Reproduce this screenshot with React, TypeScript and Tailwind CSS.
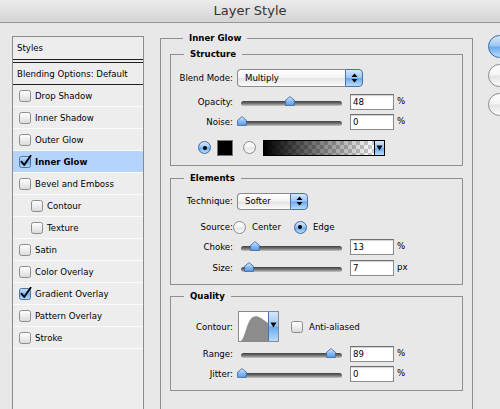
import React from "react";

const aquaBlue =
  "bg-[linear-gradient(#d4e7fc,#9cc6f3_48%,#6aa8ee_52%,#b9dcfb)]";
const aquaWhite =
  "bg-[linear-gradient(#ffffff,#f3f3f3_48%,#e3e3e3_52%,#fbfbfb)]";

const styles = [
  { name: "Drop Shadow" },
  { name: "Inner Shadow" },
  { name: "Outer Glow" },
  { name: "Inner Glow", checked: true, active: true },
  { name: "Bevel and Emboss" },
  { name: "Contour", indent: true },
  { name: "Texture", indent: true },
  { name: "Satin" },
  { name: "Color Overlay" },
  { name: "Gradient Overlay", checked: true },
  { name: "Pattern Overlay" },
  { name: "Stroke" },
];

function Checkbox({ checked, size = 11 }: { checked?: boolean; size?: number }) {
  return (
    <svg width={size + 2} height={size + 2} viewBox="0 0 13 13" className="shrink-0">
      <defs>
        <linearGradient id="cbw" x1="0" y1="0" x2="0" y2="1">
          <stop offset="0" stopColor="#ffffff" />
          <stop offset="0.5" stopColor="#eeeeee" />
          <stop offset="1" stopColor="#d8d8d8" />
        </linearGradient>
        <linearGradient id="cbb" x1="0" y1="0" x2="0" y2="1">
          <stop offset="0" stopColor="#cfe4fb" />
          <stop offset="0.5" stopColor="#7fb2ee" />
          <stop offset="1" stopColor="#b4d8fb" />
        </linearGradient>
      </defs>
      <rect x="0.5" y="1.5" width="11" height="11" rx="2" fill={checked ? "url(#cbb)" : "url(#cbw)"} stroke={checked ? "#4a74a8" : "#8d8d8d"} />
      {checked && <path d="M2.6 6.8 L5.2 10 L11.6 0.8" fill="none" stroke="#000" strokeWidth="1.9" strokeLinecap="round" strokeLinejoin="round" />}
    </svg>
  );
}

function Radio({ checked }: { checked?: boolean }) {
  return (
    <span
      className={`flex h-[13px] w-[13px] shrink-0 items-center justify-center rounded-full border ${
        checked ? "border-[#3d6aa6] " + aquaBlue : "border-[#8a8a8a] " + aquaWhite
      }`}
    >
      {checked && <span className="h-[4px] w-[4px] rounded-full bg-black" />}
    </span>
  );
}

function Label({ children }: { children: React.ReactNode }) {
  return <span className="w-[62px] shrink-0 text-right">{children}</span>;
}

function UpDown() {
  return (
    <svg width="7" height="10" viewBox="0 0 7 10">
      <path d="M3.5 0.5 L6.5 4 H0.5 Z" fill="#000" />
      <path d="M3.5 9.5 L6.5 6 H0.5 Z" fill="#000" />
    </svg>
  );
}

function Down() {
  return (
    <svg width="7" height="6" viewBox="0 0 7 6">
      <path d="M0.5 0.5 H6.5 L3.5 5.5 Z" fill="#000" />
    </svg>
  );
}

function Popup({ label, width, height }: { label: string; width: string; height: string }) {
  return (
    <div className={`ml-[4px] flex ${width} ${height} shrink-0`}>
      <div className={`flex flex-1 items-center rounded-l-[4px] border border-r-0 border-[#8a8a8a] pl-[7px] ${aquaWhite}`}>
        {label}
      </div>
      <div className={`flex w-[18px] items-center justify-center rounded-r-[4px] border border-[#4a74a8] ${aquaBlue}`}>
        <UpDown />
      </div>
    </div>
  );
}

function Thumb() {
  return (
    <svg width="10" height="10" viewBox="0 0 10 10">
      <defs>
        <linearGradient id="th" x1="0" y1="0" x2="0" y2="1">
          <stop offset="0" stopColor="#e4f0fd" />
          <stop offset="0.5" stopColor="#8dbcf1" />
          <stop offset="1" stopColor="#5d9de8" />
        </linearGradient>
      </defs>
      <path d="M5 0.6 L9.4 4.2 V9.4 H0.6 V4.2 Z" fill="url(#th)" stroke="#3f6ea9" strokeWidth="0.9" strokeLinejoin="round" />
    </svg>
  );
}

function Slider({ value }: { value: number }) {
  return (
    <div className="relative ml-[4px] h-[12px] w-[113px] shrink-0">
      <div className="absolute left-[4px] top-[5px] h-[5px] w-[101px] rounded-full bg-[linear-gradient(#3e3e3e,#7a7a7a_55%,#c9c9c9)]" />
      <div className="absolute top-0" style={{ left: value - 0.5 }}>
        <Thumb />
      </div>
    </div>
  );
}

function Field({ value }: { value: string }) {
  return (
    <div className="flex h-[16px] w-[44px] shrink-0 items-center border border-[#8c8c8c] border-t-[#6e6e6e] bg-white pl-[2px] shadow-[inset_0_1px_1px_rgba(0,0,0,0.18)]">
      {value}
    </div>
  );
}

function SliderRow({ label, value, unit, mt }: { label: string; value: number; unit: string; mt: string }) {
  return (
    <div className={`flex h-[18px] items-center ${mt}`}>
      <Label>{label}</Label>
      <Slider value={value} />
      <Field value={String(value)} />
      <span className="mb-[3px] ml-[3px]">{unit}</span>
    </div>
  );
}

function Group({ title, mt, pb, children }: { title: string; mt: string; pb: string; children: React.ReactNode }) {
  return (
    <fieldset className={`border border-[#8f8f8f] ${mt} ${pb}`}>
      <legend className="ml-[13px] h-[12px] px-[6px] font-bold leading-[12px]">{title}</legend>
      {children}
    </fieldset>
  );
}

export default function App() {
  return (
    <div className="h-[409px] w-[500px] overflow-hidden bg-[#e8e8e8] text-[8.6px] leading-[12px] text-black [font-family:'DejaVu_Sans',sans-serif]">
      <div className="flex h-[23px] items-center justify-center border-b border-[#979797] bg-[linear-gradient(#ececec,#d4d4d4)] text-[13px] text-[#333]">
        Layer Style
      </div>

      <div className="flex">
        {/* styles list */}
        <div className="ml-[12px] mt-[13px] h-[400px] w-[132px] shrink-0 border border-[#8b8b8b] bg-[#ededed]">
          <div className="flex h-[23px] items-center border-b border-[#1e1e1e] pl-[4px]">Styles</div>
          <div className="mt-[2px] flex h-[23px] items-center border-y border-[#1e1e1e] pl-[4px]">
            Blending Options: Default
          </div>
          {styles.map((s) => (
            <div
              key={s.name}
              className={`flex h-[22px] items-center gap-[3px] border-b border-[#fafafa] ${
                s.indent ? "pl-[18px]" : "pl-[6px]"
              } ${s.active ? "bg-[#b5d4fd]" : ""}`}
            >
              <Checkbox checked={s.checked} />
              <span className={s.active ? "font-bold" : ""}>{s.name}</span>
            </div>
          ))}
        </div>

        {/* main panel */}
        <fieldset className="ml-[16px] mt-[9px] h-[400px] w-[313px] shrink-0 border border-[#8f8f8f] px-[9px]">
          <legend className="ml-[13px] h-[12px] px-[6px] font-bold leading-[12px]">Inner Glow</legend>

          <Group title="Structure" mt="mt-[4px]" pb="pb-[9px]">
            <div className="mt-[9px] flex h-[18px] items-center">
              <Label>Blend Mode:</Label>
              <Popup label="Multiply" width="w-[126px]" height="h-[18px]" />
            </div>
            <SliderRow label="Opacity:" value={48} unit="%" mt="mt-[6px]" />
            <SliderRow label="Noise:" value={0} unit="%" mt="mt-[2px]" />
            <div className="mt-[8px] flex h-[17px] items-center pl-[27px]">
              <Radio checked />
              <span className="ml-[6px] h-[16px] w-[16px] border border-[#777] bg-black" />
              <span className="ml-[10px]">
                <Radio />
              </span>
              <div className="ml-[7px] flex h-[16px] border border-black">
                <div className="w-[110px] [background:linear-gradient(to_right,#000,rgba(0,0,0,0)),repeating-conic-gradient(#cbcbcb_0_25%,#ffffff_0_50%)_0_0/8px_8px]" />
                <div className={`flex w-[10px] items-center justify-center border-l border-black ${aquaBlue}`}>
                  <Down />
                </div>
              </div>
            </div>
          </Group>

          <Group title="Elements" mt="mt-[6px]" pb="pb-[7px]">
            <div className="mt-[8px] flex h-[18px] items-center">
              <Label>Technique:</Label>
              <Popup label="Softer" width="w-[71px]" height="h-[17px]" />
            </div>
            <div className="mt-[9px] flex h-[16px] items-center">
              <Label>Source:</Label>
              <Radio />
              <span className="ml-[6px]">Center</span>
              <span className="ml-[13px]">
                <Radio checked />
              </span>
              <span className="ml-[6px]">Edge</span>
            </div>
            <SliderRow label="Choke:" value={13} unit="%" mt="mt-[3px]" />
            <SliderRow label="Size:" value={7} unit="px" mt="mt-[3px]" />
          </Group>

          <Group title="Quality" mt="mt-[5px]" pb="pb-[7px]">
            <div className="mt-[9px] flex h-[31px] items-center">
              <Label>Contour:</Label>
              <div className="ml-[5px] flex h-[31px] w-[41px] shrink-0 border border-[#8a8a8a] bg-white">
                <svg width="29" height="29" viewBox="0 0 29 29" className="shrink-0">
                  <path d="M2 29 C6 26 8 8 14 5 C18 3 22 6 29 11 V29 Z" fill="#8c8c8c" />
                </svg>
                <div className={`flex flex-1 items-start justify-center border-l border-[#4a74a8] pt-[10px] ${aquaBlue}`}>
                  <Down />
                </div>
              </div>
              <span className="ml-[12px]">
                <Checkbox size={11} />
              </span>
              <span className="ml-[5px]">Anti-aliased</span>
            </div>
            <SliderRow label="Range:" value={89} unit="%" mt="mt-[3px]" />
            <SliderRow label="Jitter:" value={0} unit="%" mt="mt-[2px]" />
          </Group>
        </fieldset>

        {/* dialog buttons, cut off by the window edge */}
        <div className="ml-[15px] mt-[12px] flex w-[80px] shrink-0 flex-col gap-[6px]">
          <button aria-label="OK" className={`h-[23px] rounded-full border border-[#3b6bab] ${aquaBlue}`} />
          <button aria-label="Cancel" className={`h-[23px] rounded-full border border-[#8a8a8a] ${aquaWhite}`} />
          <button aria-label="New Style" className={`h-[23px] rounded-full border border-[#8a8a8a] ${aquaWhite}`} />
        </div>
      </div>
    </div>
  );
}
